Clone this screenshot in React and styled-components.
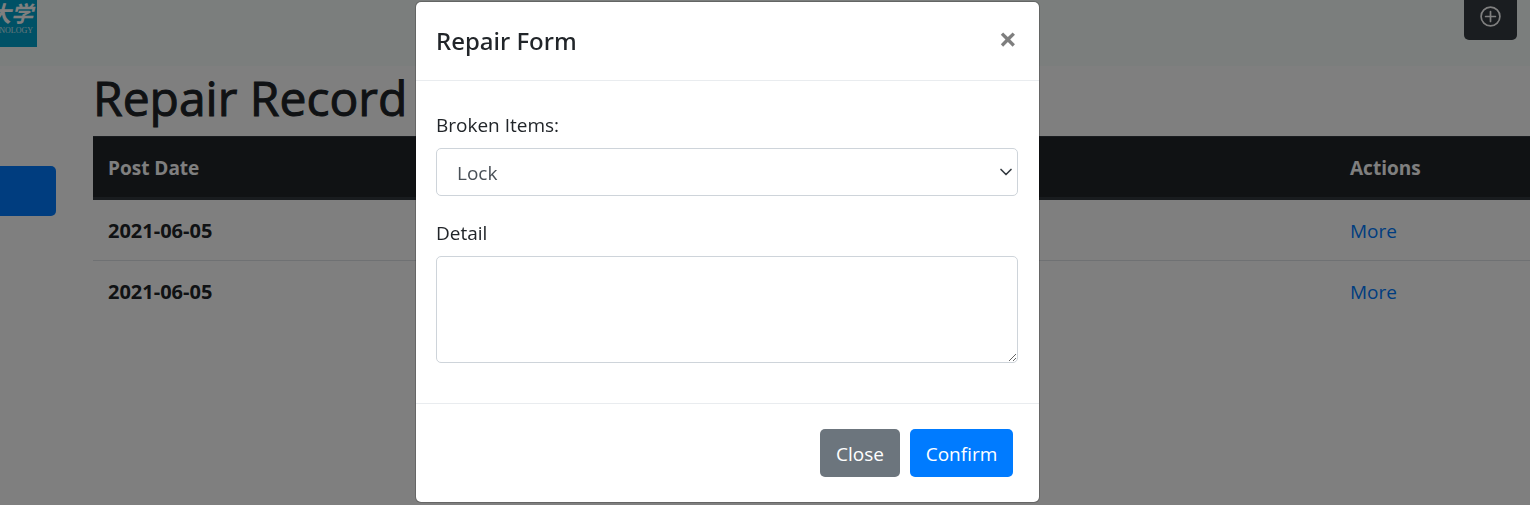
import React from "react";
import styled, { createGlobalStyle } from "styled-components";
import { ChevronDown } from "lucide-react";

const GlobalStyle = createGlobalStyle`
  *, *::before, *::after { box-sizing: border-box; }
  body {
    margin: 0;
    background: #fff;
    color: #212529;
    font-family: "Open Sans", "Noto Sans", "Noto Sans CJK SC", sans-serif;
    font-size: 19px;
    line-height: 30px;
    overflow: hidden;
  }
  button, select, textarea { font: inherit; }
`;

const Page = styled.div`
  min-height: 100vh;
`;

const Header = styled.header`
  display: flex;
  justify-content: space-between;
  align-items: flex-start;
  height: 66px;
  padding-right: 13px;
  background: #f7fdfa;
`;

const Logo = styled.a`
  display: flex;
  flex-direction: column;
  align-items: flex-end;
  justify-content: flex-end;
  width: 37px;
  height: 47px;
  padding: 0 4px 11px 0;
  overflow: hidden;
  background: #00a3cc;
  color: #fff;
  text-decoration: none;
  white-space: nowrap;
`;

const LogoName = styled.span`
  font-family: "Noto Sans CJK SC", sans-serif;
  font-size: 22px;
  font-style: italic;
  font-weight: 700;
  line-height: 28px;
`;

const LogoCaption = styled.span`
  font-family: "Liberation Serif", serif;
  font-size: 8px;
  line-height: 10px;
  opacity: 0.8;
`;

const AddButton = styled.button`
  display: flex;
  align-items: flex-end;
  justify-content: center;
  width: 53px;
  height: 40px;
  padding: 0 0 13px;
  border: 0;
  border-radius: 0 0 5px 5px;
  background: #343a40;
  color: #fff;
`;

const Content = styled.div`
  display: flex;
  gap: 37px;
`;

const Sidebar = styled.nav`
  flex: 0 0 56px;
  padding-top: 100px;
`;

const SidebarButton = styled.button`
  display: block;
  width: 100%;
  height: 50px;
  border: 0;
  border-radius: 0 5px 5px 0;
  background: #007bff;
`;

const Main = styled.main`
  flex: 1;
  min-width: 0;
`;

const PageTitle = styled.h1`
  margin: 0;
  padding: 2px 0 8px;
  font-size: 48px;
  font-weight: 500;
  line-height: 60px;
  -webkit-text-stroke: 1px currentColor;
`;

const RecordTable = styled.table`
  width: 100%;
  border-collapse: separate;
  border-spacing: 0;
  table-layout: fixed;
  text-align: left;
`;

const HeadCell = styled.th`
  width: ${(p) => p.$width || "auto"};
  height: 64px;
  padding: 2px 15px 0;
  border-top: 1px solid #32383e;
  border-bottom: 3px solid #32383e;
  background: #212529;
  color: #fff;
  font-weight: 700;
`;

const Row = styled.tr`
  &:not(:last-child) > * { border-bottom: 1px solid #dee2e6; }
`;

const DateCell = styled.th`
  height: 61px;
  padding: 1px 15px 0;
  font-size: 20px;
  font-weight: 700;
`;

const ActionCell = styled.td`
  height: 61px;
  padding: 1px 15px 0;
`;

const MoreLink = styled.a`
  color: #007bff;
  text-decoration: none;
`;

const Backdrop = styled.div`
  position: fixed;
  inset: 0;
  display: flex;
  align-items: flex-start;
  justify-content: center;
  padding: 1px 75px 0 0;
  background: rgba(0, 0, 0, 0.5);
`;

const Dialog = styled.div`
  width: 100%;
  max-width: 625px;
  border: 1px solid rgba(0, 0, 0, 0.2);
  border-radius: 6px;
  background: #fff;
  background-clip: padding-box;
`;

const DialogHeader = styled.div`
  display: flex;
  align-items: center;
  justify-content: space-between;
  padding: 20px;
  border-bottom: 1px solid #e9ecef;
`;

const DialogTitle = styled.h2`
  margin: 0;
  font-family: "Noto Sans", "Open Sans", sans-serif;
  font-size: 24px;
  font-weight: 500;
  line-height: 38px;
`;

const CloseIcon = styled.button`
  padding: 0 2px 4px;
  border: 0;
  background: transparent;
  color: #000;
  font-size: 32px;
  font-weight: 700;
  line-height: 30px;
  opacity: 0.5;
`;

const DialogBody = styled.form`
  padding: 29px 21px 18px 20px;
`;

const Field = styled.div`
  display: flex;
  flex-direction: column;
  gap: 8px;
  margin-bottom: 22px;
`;

const SelectBox = styled.div`
  position: relative;
  display: flex;
`;

const SelectArrow = styled(ChevronDown)`
  position: absolute;
  top: 14px;
  right: 2px;
  color: #343a40;
  pointer-events: none;
`;

const ItemSelect = styled.select`
  appearance: none;
  flex: 1;
  height: 48px;
  padding: 1px 30px 0 20px;
  border: 1px solid #ced4da;
  border-radius: 5px;
  background: #fff;
  color: #495057;
`;

const DetailInput = styled.textarea`
  height: 107px;
  padding: 8px 15px;
  border: 1px solid #ced4da;
  border-radius: 5px;
  background: #fff;
  color: #495057;
  resize: vertical;
`;

const DialogFooter = styled.div`
  display: flex;
  justify-content: flex-end;
  gap: 10px;
  padding: 25px 26px 25px 25px;
  border-top: 1px solid #e9ecef;
`;

const FooterButton = styled.button`
  width: ${(p) => (p.$primary ? "103px" : "80px")};
  height: 48px;
  padding: 2px 0 0;
  border: 0;
  border-radius: 5px;
  background: ${(p) => (p.$primary ? "#007bff" : "#6c757d")};
  color: #fff;
`;

const records = [
  { id: 1, date: "2021-06-05" },
  { id: 2, date: "2021-06-05" },
];

function PlusCircle() {
  return (
    <svg width="21" height="21" viewBox="0 0 21 21" fill="none" stroke="currentColor" strokeWidth="1.7" aria-hidden="true">
      <circle cx="10.5" cy="10.5" r="9.4" />
      <path d="M10.5 5.6v9.8M5.6 10.5h9.8" strokeLinecap="round" />
    </svg>
  );
}

export default function App() {
  return (
    <>
      <GlobalStyle />
      <Page>
        <Header>
          <Logo href="#">
            <LogoName>大学</LogoName>
            <LogoCaption>NOLOGY</LogoCaption>
          </Logo>
          <AddButton type="button" aria-label="Add repair record">
            <PlusCircle />
          </AddButton>
        </Header>
        <Content>
          <Sidebar>
            <SidebarButton type="button" aria-label="Repair" />
          </Sidebar>
          <Main>
            <PageTitle>Repair Record</PageTitle>
            <RecordTable>
              <thead>
                <tr>
                  <HeadCell scope="col">Post Date</HeadCell>
                  <HeadCell scope="col" $width="195px">Actions</HeadCell>
                </tr>
              </thead>
              <tbody>
                {records.map((record) => (
                  <Row key={record.id}>
                    <DateCell scope="row">{record.date}</DateCell>
                    <ActionCell>
                      <MoreLink href="#">More</MoreLink>
                    </ActionCell>
                  </Row>
                ))}
              </tbody>
            </RecordTable>
          </Main>
        </Content>
      </Page>
      <Backdrop>
        <Dialog role="dialog" aria-modal="true" aria-labelledby="dialog-title">
          <DialogHeader>
            <DialogTitle id="dialog-title">Repair Form</DialogTitle>
            <CloseIcon type="button" aria-label="Close">×</CloseIcon>
          </DialogHeader>
          <DialogBody>
            <Field>
              <label htmlFor="items">Broken Items:</label>
              <SelectBox>
                <ItemSelect id="items" defaultValue="Lock">
                  <option>Lock</option>
                </ItemSelect>
                <SelectArrow size={20} strokeWidth={2} aria-hidden="true" />
              </SelectBox>
            </Field>
            <Field>
              <label htmlFor="detail">Detail</label>
              <DetailInput id="detail" />
            </Field>
          </DialogBody>
          <DialogFooter>
            <FooterButton type="button">Close</FooterButton>
            <FooterButton type="button" $primary>Confirm</FooterButton>
          </DialogFooter>
        </Dialog>
      </Backdrop>
    </>
  );
}
